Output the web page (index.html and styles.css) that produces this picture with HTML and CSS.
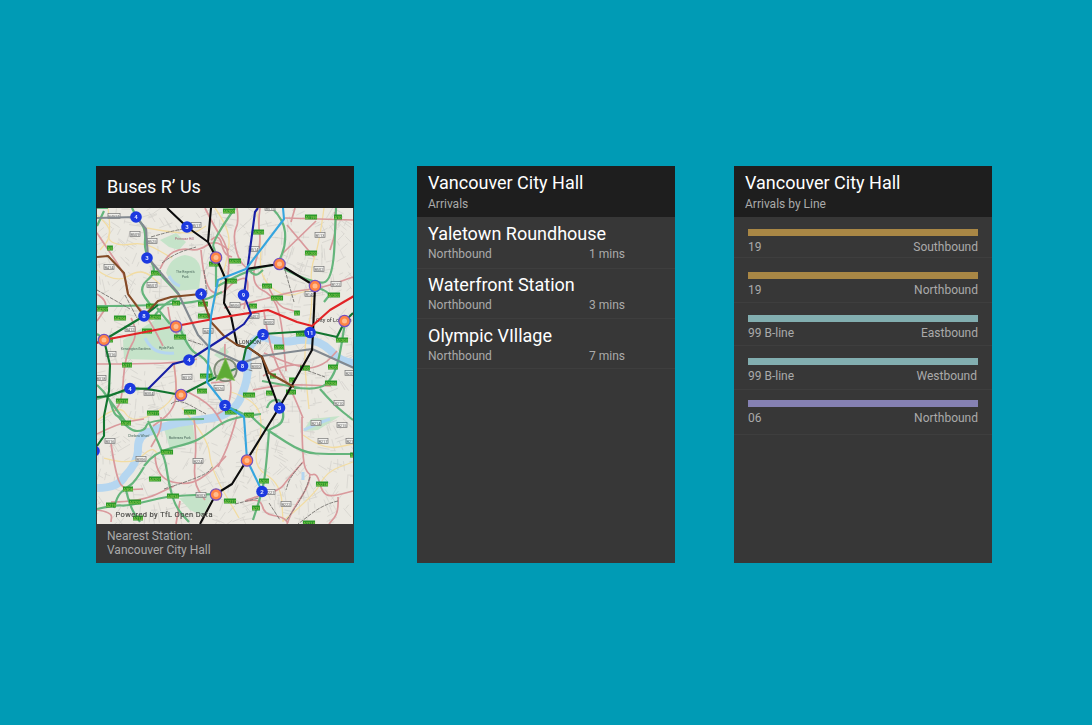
FILE: index.html
```html
<!DOCTYPE html>
<html lang="en">
<head>
<meta charset="utf-8">
<title>Buses R’ Us</title>
<link rel="stylesheet" href="styles.css">
</head>
<body>
<main class="stage">
  <section class="card card-map">
    <header class="bar bar-single"><h1 class="title">Buses R’ Us</h1></header>
    <svg class="map" viewBox="97 208 256 316" width="256" height="316">
      <rect x="97" y="208" width="256" height="316" fill="#ebe9e2"/>
      <g class="soft">
        <g id="streets"></g>
        <g class="park">
          <path d="M123 340 L158 318 L180 321 L196 361 L124 359Z"/>
          <path d="M166 273 Q170 257 185 255 Q200 257 201 272 L199 289 L176 291Z"/>
          <path d="M160 240 L176 233 L186 242 L179 250 L169 247Z"/>
          <path d="M164 429 L193 424 L195 443 L170 449Z"/>
          <path d="M179 498 L215 492 L203 516 L190 510Z"/>
          <path d="M214 355 L224 346 L229 352 L222 360Z"/>
          <path d="M311 419 L340 416 L318 430 L303 431Z"/>
        </g>
        <g class="water">
          <path class="river" d="M97 488 Q119 488 125 476 Q137 464 138 451 Q137 435 149 432 Q163 426 178 423 L212 418 Q236 414 242 394 Q250 376 247 357 Q250 338 264 337 Q280 343 293 341 Q316 336 331 351 Q340 362 354 363"/>
          <path class="lake" d="M145 338 Q151 350 160 352 T174 353"/>
          <path class="lake" d="M169 276 Q173 284 180 286"/>
          <path class="lake" d="M303 472 L303 480 M304 430 Q317 423 330 419"/>
        </g>
        <g class="road yellow">
          <path d="M97 215 L112 228 L107 240 L121 246 L144 242 L172 258"/>
          <path d="M97 270 L116 284 L141 268 L160 284"/>
          <path d="M108 208 L112 236 L100 250 M147 228 L190 236 L206 226"/>
          <path d="M215 208 L230 229 L228 258 L214 304 M256 208 L262 240 L259 277 L284 298 L309 290"/>
          <path d="M324 208 L319 245 L310 270 L313 307 L303 350 L309 409"/>
          <path d="M98 420 L119 403 L132 424 L167 407 L178 387 L173 364"/>
          <path d="M104 458 L132 466 L151 447 L158 454 M182 408 L208 437 L211 470 L239 518"/>
          <path d="M231 392 L257 400 L263 430 L252 466 L281 484 L283 522"/>
          <path d="M303 435 L323 450 L353 444 M283 521 L315 495 L326 472 L353 462"/>
        </g>
        <g class="road pink">
          <path d="M97 233 L109 251 L125 275 L128 294 M97 294 L110 302 L97 321 M128 295 L147 315 L163 346"/>
          <path d="M160 269 L166 256 L181 248 L199 251 L214 240 L229 250"/>
          <path d="M201 250 L204 285 L219 297 L235 280 L250 277 L244 309"/>
          <path d="M205 208 L216 230 L224 240 L230 260 L226 290 M211 240 L219 233 L224 254 L232 257"/>
          <path d="M260 208 L258 223 L261 243 L253 270 L255 287 L271 294 L281 315 L286 371"/>
          <path d="M237 208 L239 222 L233 234 L238 260 L251 272"/>
          <path d="M285 218 L353 220 M295 208 L291 222 M316 221 L283 253 M287 225 L314 257 M335 212 L337 228 L330 250"/>
          <path d="M224 308 L262 300 L294 291 L322 288 L353 277 M268 286 L277 306 L294 311"/>
          <path d="M97 364 L124 364 L174 363 L197 359 M174 364 L178 394 L171 413 L153 426"/>
          <path d="M131 318 L139 333 L125 355 L122 400 L115 411 M168 307 L170 325 L180 338"/>
          <path d="M225 344 L224 367 L232 382 L229 407 L216 415 M211 383 L230 381 M188 392 L210 403 L223 425"/>
          <path d="M264 312 L268 337 L277 367 L291 389 L303 418"/>
          <path d="M264 353 L302 370 L324 365 L337 351 M263 376 L284 364 L309 366 M253 390 L279 384 L331 386"/>
          <path d="M97 434 L119 423 L144 419 M111 444 L115 470 L122 490 L143 489"/>
          <path d="M161 417 L162 428 L151 447 M194 418 L197 441 L193 482 L205 500"/>
          <path d="M155 455 L156 478 L189 486 L212 471 L226 456 M111 502 L140 502 L174 486"/>
          <path d="M97 510 L112 512 L111 522 M180 501 L176 524"/>
          <path d="M237 416 L230 442 L218 467 M302 417 L302 461 L309 476 L317 473 L322 492 L330 497 L353 491"/>
          <path d="M303 462 L287 480 L281 489 L263 495 L240 502 L261 499 L264 514 L283 517 L288 523"/>
          <path d="M338 497 L339 512 L329 524 M310 474 L310 484 L292 511 L287 524"/>
        </g>
        <g class="road green">
          <path d="M132 208 L136 217 L146 229 L144 252 L158 271 L138 288 L152 307 M97 306 L144 306 L201 302 L222 292"/>
          <path d="M155 315 L164 304 L177 298 M157 308 L170 324 M158 272 L181 297"/>
          <path d="M235 208 L211 242 L216 252 L216 287 M216 287 L246 270 L279 264 M97 334 L106 340 L97 342"/>
          <path d="M272 208 L284 220 L286 244 L278 264 M284 269 L314 284 L333 281 L336 208 M315 287 L332 292 L324 302"/>
          <path d="M178 323 L188 350 L206 358 L213 377 M249 270 L255 277 L263 270"/>
          <path d="M97 385 L109 396 L114 415 L122 418 M103 391 L127 424 M97 399 L121 391 L150 388"/>
          <path d="M345 322 L340 357 L332 379 L320 389 L294 388 M320 389 L334 405 L353 420 M300 388 L262 381"/>
          <path d="M267 408 L269 401 L281 399 L279 408 M282 408 L286 421 L269 430"/>
          <path d="M118 416 L129 431 L145 431 L148 420 L204 419 M148 421 L164 452 L169 485 L176 508 L189 522"/>
          <path d="M97 509 L115 505 L128 506 L160 498 L174 496 L216 494 M144 466 L154 452 L192 443 L206 435 L224 421 L245 416"/>
          <path d="M144 467 L135 482 L126 488 L118 495 L114 508 M126 490 L130 507 L140 522"/>
          <path d="M250 415 L260 425 L269 431 L303 453 L329 454 L353 454 M269 431 L266 470 L262 492 L253 520"/>
          <path d="M97 208 L108 208 M97 226 L104 211 M224 405 L250 417 M244 416 L261 414"/>
        </g>
        <g class="road rail">
          <path d="M151 237 L178 229 L193 229 M162 263 L174 254 L196 247"/>
          <path d="M125 295 L137 318 M285 270 L294 302 M204 270 L207 294"/>
          <path d="M97 290 L130 309 M171 404 L177 398 L206 414"/>
          <path d="M302 463 L290 477 L286 490 M310 477 L305 493 L286 521 M269 503 L280 520"/>
          <path d="M164 489 L205 476 L213 466 M338 501 L324 504 L298 524 M235 504 L259 498"/>
          <path d="M188 340 L203 345 M303 369 L325 377 M234 366 L253 371"/>
        </g>
        <g id="plates"></g>
        <g class="place">
          <text x="121" y="350">Kensington Gardens</text><text x="159" y="349">Hyde Park</text>
          <text x="176" y="273">The Regent's</text><text x="182" y="278">Park</text>
          <text x="128" y="437">Chelsea Wharf</text><text x="169" y="439">Battersea Park</text>
          <text class="city" x="239" y="344">LONDON</text><text class="city" x="316" y="322">City of London</text>
          <text class="rose" x="175" y="240">Primrose Hill</text>
        </g>
      </g>
      <g class="crisp">
        <g class="route">
          <path stroke="#828990" d="M97 218 L136 217 L146 229 L148 258 L178 293 L198 335 L211 349 L242 363 L262 356 L312 349 L354 368"/>
          <path stroke="#0c0c0c" d="M167 208 L187 227 L208 242 L216 257 L226 280 L224 303 L231 316 L237 345 L249 348 L262 357 L267 375 L279 408"/>
          <path stroke="#0c0c0c" d="M211 208 L208 242 M246 269 L279 264 L315 286 L313 333 L312 350 L279 408 L232 484 L216 494 L200 524"/>
          <path stroke="#844b26" d="M97 257 L108 256 L124 273 L128 294 L144 316 L158 301 L171 297 L201 294 L211 322 L224 336 L237 345 L249 348 L262 357 L269 373 L294 387"/>
          <path stroke="#127530" d="M158 305 L144 316 L104 340 L110 365 L109 391 L104 416 L104 436 L97 446 M97 397 L109 396 L130 388 L148 389 L181 395 L214 378 L242 366 L246 348 L257 337 L263 334 L310 331 L337 337 L345 321 L353 313"/>
          <path stroke="#e12326" d="M97 343 L104 340 L176 326 L224 317 L268 310 L297 322 L312 326 L330 310 L354 296"/>
          <path stroke="#171fa5" d="M258 208 L255 212 L244 295 L251 314 L244 324 L234 331 L189 360 L173 364 L148 389"/>
          <path stroke="#35a5df" d="M283 208 L284 219 L246 269 L218 280 L211 316 L207 382 L225 405 L244 417 L247 460 L262 491"/>
        </g>
        <circle cx="225.5" cy="370" r="11.2" fill="#b5bbae" fill-opacity=".3" stroke="#7d8a76" stroke-width="1.8"/>
        <path d="M225.5 358 L234.5 380.5 L225 377.500 L216 380.500Z" fill="#5eaa36" stroke="#86c557" stroke-width=".7"/>
        <g id="stops"></g>
        <text class="credit" x="115.500" y="517" textLength="97">Powered by TfL Open Data</text>
      </g>
    </svg>
    <footer class="nearest">Nearest Station:<br>Vancouver City Hall</footer>
  </section>

  <section class="card card-arrivals">
    <header class="bar"><h1 class="title">Vancouver City Hall</h1><p class="sub">Arrivals</p></header>
    <article class="arrival arrival-first"><h2 class="title">Yaletown Roundhouse</h2><p class="meta"><span>Northbound</span><span class="mins">1 mins</span></p></article>
    <article class="arrival arrival-second"><h2 class="title">Waterfront Station</h2><p class="meta"><span>Northbound</span><span class="mins">3 mins</span></p></article>
    <article class="arrival"><h2 class="title">Olympic VIllage</h2><p class="meta"><span>Northbound</span><span class="mins">7 mins</span></p></article>
  </section>

  <section class="card card-lines">
    <header class="bar"><h1 class="title">Vancouver City Hall</h1><p class="sub">Arrivals by Line</p></header>
    <article class="line line-a"><div class="stripe gold"></div><p class="ends"><span>19</span><span>Southbound</span></p></article>
    <article class="line line-b"><div class="stripe gold"></div><p class="ends"><span>19</span><span>Northbound</span></p></article>
    <article class="line line-c"><div class="stripe sea"></div><p class="ends"><span>99 B-line</span><span>Eastbound</span></p></article>
    <article class="line line-d"><div class="stripe sea"></div><p class="ends ends-in"><span>99 B-line</span><span>Westbound</span></p></article>
    <article class="line line-e"><div class="stripe violet"></div><p class="ends"><span>06</span><span>Northbound</span></p></article>
  </section>
</main>
<script src="map.js"></script>
</body>
</html>
```
FILE: styles.css
```css
* { box-sizing: border-box; }
body { margin: 0; background: #009bb5; font-family: Roboto, "Liberation Sans", sans-serif; }
h1, h2, p { margin: 0; font-weight: 400; }
.stage { display: flex; align-items: flex-start; width: 1092px; height: 725px; padding: 166px 0 0 96px; overflow: hidden; }
.card { display: flex; flex-direction: column; flex: none; width: 258px; height: 397px; background: #373737; color: #aaa; font-size: 12px; line-height: 14px; }
.card-arrivals { margin-left: 63px; }
.card-lines { margin-left: 59px; }
.bar { flex: none; height: 51px; padding: 6px 11px 0; background: #1e1e1e; }
.bar-single { height: 42px; padding-top: 10px; }
.title { color: #fff; font-size: 18px; line-height: 22px; white-space: nowrap; }
.sub { margin-top: 3px; }
.map { display: block; flex: none; margin: 0 auto; }
.nearest { padding: 5px 11px 0; }

.arrival { flex: none; height: 50px; padding: 6px 11px 0; border-bottom: 1px solid #3e3e3e; }
.arrival-first { height: 52px; }
.arrival-second { padding-top: 5px; }
.meta { display: flex; margin-top: 2px; }
.mins { margin-left: auto; margin-right: 39px; }

.line { flex: none; padding: 12px 14px 0; border-bottom: 1px solid #3e3e3e; }
.line-a { height: 41px; }
.line-b { height: 45px; padding-top: 14px; }
.line-c { height: 43px; }
.line-d { height: 44px; }
.line-e { height: 45px; padding-top: 10px; }
.stripe { height: 7px; }
.gold { background: #a98745; }
.sea { background: #82aeb0; }
.violet { background: #8581b3; }
.ends { display: flex; justify-content: space-between; margin-top: 4px; }
.ends-in { padding-right: 1px; }

.soft { filter: blur(.6px); }
.crisp { filter: blur(.4px); }
.map path { stroke-linejoin: round; }
.street { fill: none; stroke: #cfccc7; stroke-width: .6; }
.park path { fill: #c5e3c9; }
.water path, .road path, .route path { fill: none; }
.river { stroke: #b5d6f0; stroke-width: 8; }
.lake { stroke: #b5d6f0; stroke-width: 3; }
.yellow { stroke: #f2dca2; stroke-width: 1.3; }
.pink { stroke: #d9999c; stroke-width: 1.7; }
.green { stroke: #65b57c; stroke-width: 2.2; }
.rail { stroke: #75736f; stroke-width: .9; stroke-dasharray: 4 1; }
.route { stroke-width: 2.1; }
.plate { font: 4px Roboto, sans-serif; text-anchor: middle; }
.plate-a rect { fill: #2b9a29; }
.plate-a text { fill: #a5d05b; }
.plate-b rect { fill: #efefec; stroke: #777; stroke-width: .7; }
.plate-b text { fill: #666; }
.place { font: 3.3px Roboto, sans-serif; fill: #48665a; }
.city { font-size: 5.500px; fill: #333; }
.rose { fill: #a55a70; }
.stop { font: bold 6px Roboto, sans-serif; fill: #dce4ff; text-anchor: middle; }
.credit { font: 7.500px Roboto, sans-serif; fill: #4c4c48; stroke: #4c4c48; stroke-width: .15; }
```
FILE: map.js
```js
const NS = "http://www.w3.org/2000/svg";
function add(parent, tag, attrs, text) {
  const el = document.createElementNS(NS, tag);
  for (const k in attrs) el.setAttribute(k, attrs[k]);
  if (text) el.textContent = text;
  parent.appendChild(el);
  return el;
}

// Roads are listed as corner points; round every corner between segment midpoints.
document.querySelectorAll(".road path").forEach(path => {
  const out = path.getAttribute("d").split("M").filter(s => s.trim()).map(part => {
    const p = part.split("L").map(s => s.trim().split(/\s+/).map(Number));
    let s = `M${p[0]}`;
    for (let i = 1; i < p.length - 1; i++) {
      s += `Q${p[i]} ${(p[i][0] + p[i + 1][0]) / 2},${(p[i][1] + p[i + 1][1]) / 2}`;
    }
    return s + `L${p[p.length - 1]}`;
  });
  path.setAttribute("d", out.join(""));
});

// Side streets: short crossing strokes whose heading drifts over the map.
let seed = 7;
const rnd = () => (seed = (seed * 16807) % 2147483647) / 2147483647;
let d = "";
for (let i = 0; i < 1050; i++) {
  const x = 97 + rnd() * 256, y = 208 + rnd() * 316;
  const a = Math.sin(x / 37) + Math.cos(y / 43) + (rnd() > .5 ? Math.PI / 2 : 0);
  const l = 4 + rnd() * 10;
  d += `M${x.toFixed(1)} ${y.toFixed(1)}l${(Math.cos(a) * l).toFixed(1)} ${(Math.sin(a) * l).toFixed(1)}`;
}
add(document.getElementById("streets"), "path", { class: "street", d });

const plates = document.getElementById("plates");
function plate(kind, x, y, label) {
  const w = label.length * 2.1 + 1.6;
  const g = add(plates, "g", { class: "plate plate-" + kind });
  add(g, "rect", { x: x - w / 2, y: y - 2.5, width: w, height: 5 });
  add(g, "text", { x, y: y + 1.5 }, label);
}
[[110,248,"A5"],[156,273,"A501"],[102,309,"A4207"],[150,306,"A40"],[176,303,"A41"],[203,304,"A400"],
 [229,211,"A5200"],[258,232,"A5203"],[311,217,"A1199"],[338,217,"A10"],[311,253,"A1200"],[235,261,"A5202"],
 [231,281,"A4200"],[267,286,"A501"],[277,298,"A5201"],[253,306,"A40"],[334,295,"A1202"],[297,313,"A3"],[214,264,"A400"],
 [120,318,"A4206"],[155,317,"A4209"],[147,331,"A402"],[180,337,"A4202"],[204,316,"A4201"],[127,365,"A315"],
 [206,376,"A3214"],[202,391,"A302"],[122,401,"A3218"],[190,412,"A3216"],[153,413,"A3217"],[109,340,"A40"],
 [279,347,"A300"],[302,334,"A1211"],[342,340,"A1203"],[305,368,"A100"],[333,367,"A200"],[331,383,"A2206"],
 [273,376,"A3"],[292,380,"A2"],[291,392,"A201"],[270,393,"A23"],[249,395,"A3036"],[231,412,"A3205"],
 [249,415,"A203"],[126,423,"A304"],[167,452,"A3031"],[155,479,"A3207"],[128,489,"A308"],[111,505,"A219"],
 [135,502,"A3209"],[173,496,"A3036"],[138,518,"A214"],[264,481,"A203"],[230,501,"A2217"],[256,508,"A23"],
 [322,484,"A2218"],[309,523,"A2214"],[353,455,"A2"]
].forEach(p => plate("a", ...p));
[[114,216,"B4521"],[135,234,"B509"],[152,241,"B525"],[109,267,"B414"],[152,285,"B507"],[196,225,"B517"],
 [270,208,"B515"],[320,235,"B113"],[254,249,"B514"],[319,269,"B502"],[336,284,"B122"],[310,294,"B140"],
 [235,305,"B506"],[130,329,"B412"],[111,354,"B316"],[101,378,"B318"],[149,393,"B304"],[187,377,"B310"],
 [208,331,"B406"],[219,388,"B326"],[269,322,"B300"],[254,316,"B402"],[110,441,"B316"],[141,459,"B306"],
 [198,461,"B224"],[201,495,"B303"],[316,423,"B214"],[342,425,"B215"],[323,441,"B217"],[351,441,"B216"],
 [286,504,"B222"],[270,492,"B221"],[339,403,"B210"],[350,373,"B205"],[256,366,"B300"]
].forEach(p => plate("b", ...p));

const stops = document.getElementById("stops");
[[136,217,"4"],[187,227,"3"],[147,258,"3"],[201,294,"4"],[144,316,"8"],[189,360,"4"],[130,388.5,"4"],
 [243.5,295,"9"],[263,334.5,"2"],[310,332.5,"11"],[242.5,366,"8"],[279.5,408,"3"],[225,405.5,"2"],[262,491.5,"2"],[94,451,""]
].forEach(([x, y, n]) => {
  add(stops, "circle", { cx: x, cy: y, r: 5.8, fill: "#1c39e0" });
  add(stops, "text", { class: "stop", x, y: y + 2.1 }, n);
});
[[216,257.5],[279.5,264],[315,286],[104,340],[176,326.5],[181,395],[344.5,321],[247,460.5],[216,494.5]
].forEach(([cx, cy]) => {
  add(stops, "circle", { cx, cy, r: 5.7, fill: "#ff8445", stroke: "#7651bd", "stroke-width": 1.2 });
  add(stops, "circle", { cx, cy, r: 2.5, fill: "#ffbd8f" });
});
```
